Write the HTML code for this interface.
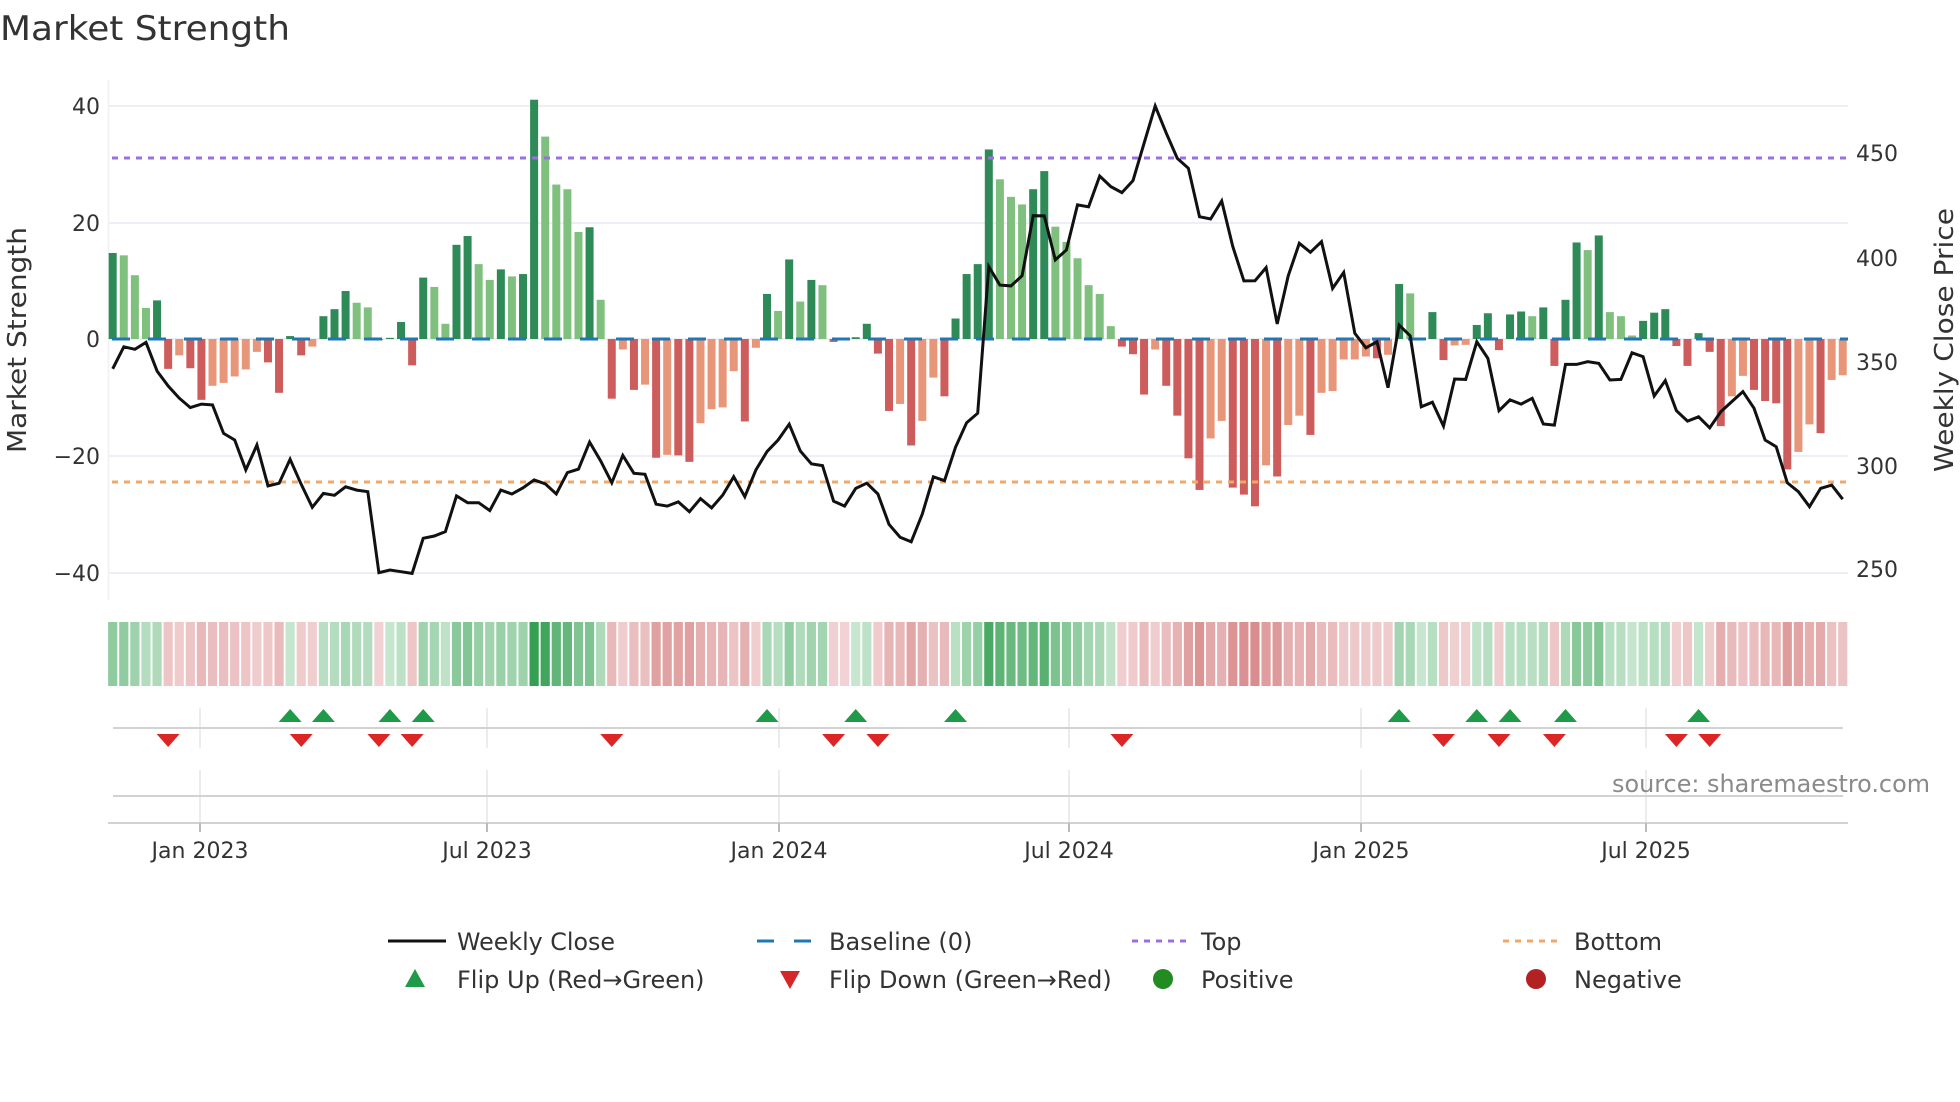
<!DOCTYPE html>
<html><head><meta charset="utf-8"><style>
html,body{margin:0;padding:0;background:#fff;width:1960px;height:1102px;overflow:hidden}
svg{display:block}
text{font-family:"DejaVu Sans","Liberation Sans",sans-serif;fill:#333}
</style></head><body>
<svg id="s" width="1960" height="1102" viewBox="0 0 1960 1102" xmlns="http://www.w3.org/2000/svg">
<text x="0" y="40" font-size="34" textLength="290" lengthAdjust="spacingAndGlyphs">Market Strength</text>
<line x1="108.5" y1="80" x2="108.5" y2="600" stroke="#eef0f4" stroke-width="1.5"/>
<g stroke="#eceff5" stroke-width="2">
<line x1="109" y1="106" x2="1848" y2="106"/><line x1="109" y1="223" x2="1848" y2="223"/>
<line x1="109" y1="339" x2="1848" y2="339"/><line x1="109" y1="456" x2="1848" y2="456"/>
<line x1="109" y1="573" x2="1848" y2="573"/></g>
<g font-size="22" text-anchor="end">
<text x="100" y="114">40</text><text x="100" y="231">20</text><text x="100" y="347">0</text>
<text x="100" y="464">−20</text><text x="100" y="581">−40</text></g>
<g font-size="22">
<text x="1856" y="161">450</text><text x="1856" y="266">400</text><text x="1856" y="370">350</text>
<text x="1856" y="474">300</text><text x="1856" y="577">250</text></g>
<text transform="translate(26,340) rotate(-90)" font-size="26" text-anchor="middle" textLength="226" lengthAdjust="spacingAndGlyphs">Market Strength</text>
<text transform="translate(1953,340) rotate(-90)" font-size="26" text-anchor="middle" textLength="264" lengthAdjust="spacingAndGlyphs">Weekly Close Price</text>
<g id="bars"></g>
<line x1="112" y1="339" x2="1848" y2="339" stroke="#1f77b4" stroke-width="3" stroke-dasharray="18,18"/>
<line x1="112" y1="158" x2="1848" y2="158" stroke="#9b6fe0" stroke-width="3" stroke-dasharray="6,6"/>
<line x1="112" y1="482" x2="1848" y2="482" stroke="#f0a868" stroke-width="3" stroke-dasharray="6,6"/>
<polyline id="price" fill="none" stroke="#111" stroke-width="3" stroke-linejoin="miter"/>
<g id="heat"></g>
<g stroke="#e6e6e6" stroke-width="1.5" id="vg"></g>
<line x1="113" y1="728" x2="1843" y2="728" stroke="#d2d2d2" stroke-width="2"/>
<line x1="113" y1="796" x2="1843" y2="796" stroke="#d2d2d2" stroke-width="2"/>
<line x1="108" y1="823" x2="1848" y2="823" stroke="#d2d2d2" stroke-width="2"/>
<g id="flips"></g>
<g font-size="22" text-anchor="middle" id="ticks"></g>
<text x="1612" y="792" font-size="24" fill="#8a8a8a" style="fill:#8a8a8a" textLength="318" lengthAdjust="spacingAndGlyphs">source: sharemaestro.com</text>
<g font-size="24">
<line x1="388" y1="941" x2="446" y2="941" stroke="#111" stroke-width="3"/>
<text x="457" y="950" textLength="158" lengthAdjust="spacingAndGlyphs">Weekly Close</text>
<line x1="757" y1="941" x2="811" y2="941" stroke="#1f77b4" stroke-width="3" stroke-dasharray="17,20"/>
<text x="829" y="950">Baseline (0)</text>
<line x1="1132" y1="941" x2="1186" y2="941" stroke="#9b6fe0" stroke-width="3" stroke-dasharray="6,6"/>
<text x="1201" y="950">Top</text>
<line x1="1503" y1="941" x2="1557" y2="941" stroke="#f0a868" stroke-width="3" stroke-dasharray="6,6"/>
<text x="1574" y="950">Bottom</text>
<polygon points="415,969 405,987 425,987" fill="#1e9a48"/>
<text x="457" y="988">Flip Up (Red→Green)</text>
<polygon points="780,971 800,971 790,989" fill="#d62728"/>
<text x="829" y="988">Flip Down (Green→Red)</text>
<circle cx="1163" cy="979" r="10" fill="#228b22"/>
<text x="1201" y="988">Positive</text>
<circle cx="1536" cy="979" r="10" fill="#b22222"/>
<text x="1574" y="988">Negative</text>
</g>
</svg>
<script>
var V=[14.7,14.3,10.9,5.3,6.6,-5.1,-2.8,-5.0,-10.4,-8.0,
-7.5,-6.4,-5.2,-2.2,-4.0,-9.2,0.5,-2.8,-1.3,3.9,
5.1,8.2,6.2,5.4,-0.2,0.2,2.9,-4.5,10.5,8.9,
2.6,16.1,17.6,12.8,10.1,11.9,10.7,11.1,40.9,34.6,
26.4,25.6,18.3,19.1,6.7,-10.2,-1.8,-8.7,-7.8,-20.3,
-19.8,-19.9,-21.0,-14.4,-12.0,-11.7,-5.5,-14.1,-1.5,7.7,
4.8,13.6,6.4,10.1,9.2,-0.5,-0.2,0.3,2.6,-2.5,
-12.3,-11.1,-18.2,-14.0,-6.6,-9.8,3.5,11.1,12.8,32.4,
27.3,24.3,23.0,25.6,28.7,19.2,16.6,13.8,9.2,7.7,
2.2,-1.3,-2.6,-9.5,-1.8,-8.0,-13.1,-20.4,-25.8,-17.0,
-14.0,-25.4,-26.6,-28.6,-21.6,-23.5,-14.7,-13.1,-16.4,-9.2,
-8.9,-3.5,-3.5,-3.0,-3.3,-2.7,9.4,7.8,0.2,4.6,
-3.6,-1.1,-1.0,2.4,4.4,-1.9,4.2,4.7,3.9,5.4,
-4.6,6.7,16.5,15.2,17.7,4.6,3.9,0.6,3.1,4.5,
5.1,-1.2,-4.6,1.0,-2.2,-14.9,-9.8,-6.3,-8.7,-10.6,
-11.0,-22.3,-19.3,-14.6,-16.1,-7.0,-6.2];
var P=[346.4,357.0,355.8,359.1,345.3,338.1,332.3,327.7,329.4,329.0,
315.3,312.1,297.7,309.7,290.0,291.3,302.8,290.8,279.7,286.4,
285.5,289.6,288.0,287.2,248.2,249.5,248.7,247.9,264.8,265.9,
268.0,285.2,281.9,281.9,278.1,288.0,286.1,289.1,292.9,291.0,
286.1,296.4,298.1,311.1,302.0,291.5,304.7,296.1,295.6,281.2,
280.3,282.3,277.6,283.9,279.4,285.6,294.4,284.8,297.7,306.5,
312.1,319.7,306.8,300.6,299.8,282.7,280.3,288.8,291.3,286.1,
271.5,265.3,263.1,276.5,294.4,292.5,308.6,320.4,325.0,395.6,
386.7,386.3,391.2,420.1,420.0,398.8,403.6,425.3,424.4,439.2,
434.1,431.2,437.0,455.0,472.9,459.8,447.7,442.9,419.6,418.5,
427.2,405.2,388.7,388.8,395.1,368.0,391.1,406.8,402.5,407.6,
385.1,392.8,363.5,356.5,359.4,337.3,367.5,362.3,328.1,330.3,
318.8,341.5,341.3,359.4,351.4,326.2,331.4,329.4,332.2,319.8,
319.3,348.5,348.5,349.8,349.0,341.0,341.3,354.1,352.2,333.3,
340.7,326.2,321.2,323.3,318.0,325.7,330.6,335.4,327.4,312.1,
308.9,291.5,287.2,280.0,288.8,290.4,283.6];
var NS="http://www.w3.org/2000/svg";
function el(t,a,p){var e=document.createElementNS(NS,t);for(var k in a)e.setAttribute(k,a[k]);p.appendChild(e);return e;}
function X(i){return 112.7+11.09*i;}
var bars=document.getElementById('bars'),heat=document.getElementById('heat');
function mix(a,b,t){return 'rgb('+a.map(function(v,k){return Math.round(v+(b[k]-v)*t)}).join(',')+')';}
for(var i=0;i<V.length;i++){
 var v=V[i],pv=i?V[i-1]:0,c;
 if(v>=0){c=(v>=pv)?'#2e8b57':'#80c07e';}else{c=(v<pv)?'#cd5c5c':'#e8967a';}
 var y0=339,y1=339-v*5.85;
 el('rect',{x:X(i)-4,y:Math.min(y0,y1),width:8,height:Math.max(1,Math.abs(y1-y0)),fill:c},bars);
 var t=Math.min(1,Math.abs(v)/38);t=0.12+0.88*t;
 var hc=v>=0?mix([220,240,225],[52,160,82],t):mix([245,222,224],[210,118,118],t);
 el('rect',{x:X(i)-4.6,y:622,width:9.2,height:64,fill:hc},heat);
}
var pts=[];for(var i=0;i<P.length;i++){pts.push(X(i).toFixed(1)+','+(153.6+(450-P[i])*2.077).toFixed(1));}
document.getElementById('price').setAttribute('points',pts.join(' '));
var vg=document.getElementById('vg'),ticks=document.getElementById('ticks');
var TX=[[200,'Jan 2023'],[487,'Jul 2023'],[779,'Jan 2024'],[1069,'Jul 2024'],[1361,'Jan 2025'],[1646,'Jul 2025']];
TX.forEach(function(t){
 el('line',{x1:t[0],y1:708,x2:t[0],y2:748},vg);
 el('line',{x1:t[0],y1:770,x2:t[0],y2:823},vg);
 el('line',{x1:t[0],y1:823,x2:t[0],y2:832,stroke:'#bbb','stroke-width':2},document.getElementById('s'));
 var tx=el('text',{x:t[0],y:858},ticks);tx.textContent=t[1];
});
var fl=document.getElementById('flips');
[16,19,25,28,59,67,76,116,123,126,131,143].forEach(function(i){var x=X(i);
 el('polygon',{points:(x)+',709 '+(x-11.5)+',722 '+(x+11.5)+',722',fill:'#1e9a48'},fl);});
[5,17,24,27,45,65,69,91,120,125,130,141,144].forEach(function(i){var x=X(i);
 el('polygon',{points:(x-11.5)+',734 '+(x+11.5)+',734 '+x+',747',fill:'#dc2626'},fl);});
</script>
</body></html>
